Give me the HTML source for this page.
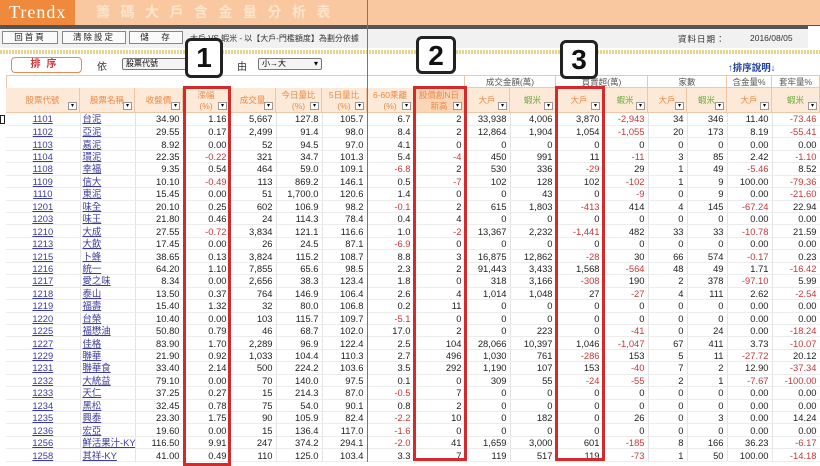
<!DOCTYPE html>
<html><head><meta charset="utf-8">
<style>
*{margin:0;padding:0;box-sizing:border-box}
body{width:820px;height:462px;overflow:hidden;background:#fff;font-family:"Liberation Sans","Noto Sans CJK TC",sans-serif;position:relative}
.a{position:absolute}
.top{left:0;top:0;width:820px;height:25px;background:#f9c8a0}
.logo{left:0;top:0;width:75px;height:25px;background:#ef8a3c;color:#fff;font-family:"Liberation Serif","Noto Serif CJK SC",serif;font-size:18px;line-height:25px;padding-left:9px;letter-spacing:1px}
.ttl{left:96px;top:2px;font-size:14px;color:#fbe5cc;letter-spacing:10.5px;line-height:20px;font-weight:bold}
.gbar{left:0;top:25px;width:820px;height:4px;background:#555}
.brow{left:0;top:29px;width:820px;height:19px;background:#f1f1f1}
.btn{top:31px;height:13px;border:1px solid #888;background:#fafafa;font-size:8.5px;line-height:11px;text-align:center;letter-spacing:2px;color:#222}
.dash{left:0;top:50px;width:820px;height:4px;background:repeating-linear-gradient(90deg,#e6d48a 0 2px,#fff 2px 3px)}
.sel{height:12px;border:1px solid #777;background:#f4f4f4;font-size:8px;line-height:10px;padding-left:3px;border-radius:2px}
.sel:after{content:"▾";position:absolute;right:3px;top:0;font-size:8px}
.num{background:#fff;border:3px solid #222;border-radius:6px;font:bold 28px/34px "Liberation Sans",sans-serif;text-align:center;color:#111;z-index:5}
.rb{border:3px solid #d42a2a;z-index:4}
table{border-collapse:collapse;table-layout:fixed;position:absolute;left:6px;top:113px;width:814px}
td{height:12.44px;font-size:9.4px;line-height:11px;text-align:right;padding:0 3px 0 0;border-right:1px solid #e4e4e4;border-bottom:1px solid #ececec;white-space:nowrap;overflow:hidden;color:#222}
td:nth-child(1){text-align:center;padding:0}
td:nth-child(2){text-align:left;padding-left:2px}
td:nth-child(1) span,td:nth-child(2) span{color:#3b3b9e;text-decoration:underline}
td.n{color:#c43838}
.h{background:#fde9d8;border-right:1px solid #f0c7a4;border-bottom:1px solid #f0c7a4;color:#e88a44;font-size:8.5px;text-align:center;position:absolute}
.h i{position:absolute;right:2px;bottom:2px;width:9px;height:8px;background:#fff;border:1px solid #999;font-style:normal;font-size:6px;line-height:6px;color:#000}
.g{color:#6aa83a}
</style></head><body>
<div class="a top"></div>
<div class="a logo">Trendx</div>
<div class="a ttl">籌碼大戶含金量分析表</div>
<div class="a gbar"></div>
<div class="a brow"></div>
<div class="a btn" style="left:2px;width:56px">回首頁</div>
<div class="a btn" style="left:62px;width:64px">清除設定</div>
<div class="a btn" style="left:129px;width:54px">儲　存</div>
<div class="a" style="left:190px;top:33px;font-size:8px;color:#333">大戶 VS 蝦米 - 以【大戶-門檻額度】為劃分依據</div>
<div class="a" style="left:678px;top:33px;font-size:8.5px;color:#333;letter-spacing:1px">資料日期：</div>
<div class="a" style="left:750px;top:33px;font-size:8.5px;color:#333">2016/08/05</div>
<div class="a" style="left:808px;top:26px;width:12px;height:24px;background:#fff"></div>
<div class="a dash"></div>
<div class="a" style="left:11px;top:57px;width:71px;height:16px;border:1px solid #e48a52;border-radius:4px;background:#fff;color:#d83030;font-size:10px;font-weight:bold;text-align:center;line-height:14px;letter-spacing:6px">排序</div>
<div class="a" style="left:97px;top:58px;font-size:10px;color:#333">依</div>
<div class="a sel" style="left:122px;top:58px;width:100px">股票代號</div>
<div class="a" style="left:237px;top:58px;font-size:10px;color:#333">由</div>
<div class="a sel" style="left:258px;top:58px;width:64px">小→大</div>
<div class="a" style="left:728px;top:60px;font-size:9.5px;color:#1b3fa0;font-weight:bold">↑排序說明↓</div>
<div class="a" style="left:6px;top:75px;width:814px;height:38px;border-top:1px solid #f0c7a4;border-left:1px solid #f0c7a4"></div>
<div class="a" style="left:0;top:115px;width:5px;height:9px;border:1px solid #222"></div>
<div class="a" style="left:367px;top:0;width:1px;height:462px;background:#777;z-index:3"></div>

<div class="h" style="left:414px;top:76px;width:51px;height:12px;background:#fff"></div>
<div class="h" style="left:465px;top:76px;width:91px;height:12px;background:#fff;color:#555">成交金額(萬)</div>
<div class="h" style="left:556px;top:76px;width:92px;height:12px;background:#fff;color:#555">買賣超(萬)</div>
<div class="h" style="left:648px;top:76px;width:79px;height:12px;background:#fff;color:#555">家數</div>
<div class="h" style="left:727px;top:76px;width:45px;height:12px;background:#fff;color:#555">含金量%</div>
<div class="h" style="left:772px;top:76px;width:48px;height:12px;background:#fff;color:#555">套牢量%</div>
<div class="h" style="left:6px;top:88px;width:74px;height:25px;line-height:25px">股票代號<i>▾</i></div>
<div class="h" style="left:80px;top:88px;width:55px;height:25px;line-height:25px">股票名稱<i>▾</i></div>
<div class="h" style="left:135px;top:88px;width:48px;height:25px;line-height:25px">收盤價<i>▾</i></div>
<div class="h" style="left:183px;top:88px;width:47px;height:25px;line-height:11px;padding-top:2px">漲幅<br>(%)<i>▾</i></div>
<div class="h" style="left:230px;top:88px;width:46px;height:25px;line-height:25px">成交量<i>▾</i></div>
<div class="h" style="left:276px;top:88px;width:46px;height:25px;line-height:11px;padding-top:2px">今日量比<br>(%)<i>▾</i></div>
<div class="h" style="left:322px;top:88px;width:45px;height:25px;line-height:11px;padding-top:2px">5日量比<br>(%)<i>▾</i></div>
<div class="h" style="left:367px;top:88px;width:47px;height:25px;line-height:11px;padding-top:2px">6-60乘離<br>(%)<i>▾</i></div>
<div class="h" style="left:414px;top:88px;width:51px;height:25px;line-height:11px;padding-top:2px;background:#fbd5b8">股價創N日<br>新高<i>▾</i></div>
<div class="h" style="left:465px;top:88px;width:45px;height:25px;line-height:25px">大戶<i>▾</i></div>
<div class="h g" style="left:510px;top:88px;width:46px;height:25px;line-height:25px">蝦米<i>▾</i></div>
<div class="h" style="left:556px;top:88px;width:47px;height:25px;line-height:25px">大戶<i>▾</i></div>
<div class="h g" style="left:603px;top:88px;width:45px;height:25px;line-height:25px">蝦米<i>▾</i></div>
<div class="h" style="left:648px;top:88px;width:39px;height:25px;line-height:25px">大戶<i>▾</i></div>
<div class="h g" style="left:687px;top:88px;width:40px;height:25px;line-height:25px">蝦米<i>▾</i></div>
<div class="h" style="left:727px;top:88px;width:45px;height:25px;line-height:25px">大戶<i>▾</i></div>
<div class="h g" style="left:772px;top:88px;width:48px;height:25px;line-height:25px">蝦米<i>▾</i></div>

<table>
<colgroup><col style="width:74px"><col style="width:55px"><col style="width:48px"><col style="width:47px"><col style="width:46px"><col style="width:46px"><col style="width:45px"><col style="width:47px"><col style="width:51px"><col style="width:45px"><col style="width:46px"><col style="width:47px"><col style="width:45px"><col style="width:39px"><col style="width:40px"><col style="width:45px"><col style="width:48px"></colgroup>
<tr><td><span>1101</span></td><td><span>台泥</span></td><td>34.90</td><td>1.16</td><td>5,667</td><td>127.8</td><td>105.7</td><td>6.7</td><td>2</td><td>33,938</td><td>4,006</td><td>3,870</td><td class="n">-2,943</td><td>34</td><td>346</td><td>11.40</td><td class="n">-73.46</td></tr>
<tr><td><span>1102</span></td><td><span>亞泥</span></td><td>29.55</td><td>0.17</td><td>2,499</td><td>91.4</td><td>98.0</td><td>8.4</td><td>2</td><td>12,864</td><td>1,904</td><td>1,054</td><td class="n">-1,055</td><td>20</td><td>173</td><td>8.19</td><td class="n">-55.41</td></tr>
<tr><td><span>1103</span></td><td><span>嘉泥</span></td><td>8.92</td><td>0.00</td><td>52</td><td>94.5</td><td>97.0</td><td>4.1</td><td>0</td><td>0</td><td>0</td><td>0</td><td>0</td><td>0</td><td>0</td><td>0.00</td><td>0.00</td></tr>
<tr><td><span>1104</span></td><td><span>環泥</span></td><td>22.35</td><td class="n">-0.22</td><td>321</td><td>34.7</td><td>101.3</td><td>5.4</td><td class="n">-4</td><td>450</td><td>991</td><td>11</td><td class="n">-11</td><td>3</td><td>85</td><td>2.42</td><td class="n">-1.10</td></tr>
<tr><td><span>1108</span></td><td><span>幸福</span></td><td>9.35</td><td>0.54</td><td>464</td><td>59.0</td><td>109.1</td><td class="n">-6.8</td><td>2</td><td>530</td><td>336</td><td class="n">-29</td><td>29</td><td>1</td><td>49</td><td class="n">-5.46</td><td>8.52</td></tr>
<tr><td><span>1109</span></td><td><span>信大</span></td><td>10.10</td><td class="n">-0.49</td><td>113</td><td>869.2</td><td>146.1</td><td>0.5</td><td class="n">-7</td><td>102</td><td>128</td><td>102</td><td class="n">-102</td><td>1</td><td>9</td><td>100.00</td><td class="n">-79.36</td></tr>
<tr><td><span>1110</span></td><td><span>東泥</span></td><td>15.45</td><td>0.00</td><td>51</td><td>1,700.0</td><td>120.6</td><td>1.4</td><td>0</td><td>0</td><td>43</td><td>0</td><td class="n">-9</td><td>0</td><td>9</td><td>0.00</td><td class="n">-21.60</td></tr>
<tr><td><span>1201</span></td><td><span>味全</span></td><td>20.10</td><td>0.25</td><td>602</td><td>106.9</td><td>98.2</td><td class="n">-0.1</td><td>2</td><td>615</td><td>1,803</td><td class="n">-413</td><td>414</td><td>4</td><td>145</td><td class="n">-67.24</td><td>22.94</td></tr>
<tr><td><span>1203</span></td><td><span>味王</span></td><td>21.80</td><td>0.46</td><td>24</td><td>114.3</td><td>78.4</td><td>0.4</td><td>4</td><td>0</td><td>0</td><td>0</td><td>0</td><td>0</td><td>0</td><td>0.00</td><td>0.00</td></tr>
<tr><td><span>1210</span></td><td><span>大成</span></td><td>27.55</td><td class="n">-0.72</td><td>3,834</td><td>121.1</td><td>116.6</td><td>1.0</td><td class="n">-2</td><td>13,367</td><td>2,232</td><td class="n">-1,441</td><td>482</td><td>33</td><td>33</td><td class="n">-10.78</td><td>21.59</td></tr>
<tr><td><span>1213</span></td><td><span>大飲</span></td><td>17.45</td><td>0.00</td><td>26</td><td>24.5</td><td>87.1</td><td class="n">-6.9</td><td>0</td><td>0</td><td>0</td><td>0</td><td>0</td><td>0</td><td>0</td><td>0.00</td><td>0.00</td></tr>
<tr><td><span>1215</span></td><td><span>卜蜂</span></td><td>38.65</td><td>0.13</td><td>3,824</td><td>115.2</td><td>108.7</td><td>8.8</td><td>3</td><td>16,875</td><td>12,862</td><td class="n">-28</td><td>30</td><td>66</td><td>574</td><td class="n">-0.17</td><td>0.23</td></tr>
<tr><td><span>1216</span></td><td><span>統一</span></td><td>64.20</td><td>1.10</td><td>7,855</td><td>65.6</td><td>98.5</td><td>2.3</td><td>2</td><td>91,443</td><td>3,433</td><td>1,568</td><td class="n">-564</td><td>48</td><td>49</td><td>1.71</td><td class="n">-16.42</td></tr>
<tr><td><span>1217</span></td><td><span>愛之味</span></td><td>8.34</td><td>0.00</td><td>2,656</td><td>38.3</td><td>123.4</td><td>1.8</td><td>0</td><td>318</td><td>3,166</td><td class="n">-308</td><td>190</td><td>2</td><td>378</td><td class="n">-97.10</td><td>5.99</td></tr>
<tr><td><span>1218</span></td><td><span>泰山</span></td><td>13.50</td><td>0.37</td><td>764</td><td>146.9</td><td>106.4</td><td>2.6</td><td>4</td><td>1,014</td><td>1,048</td><td>27</td><td class="n">-27</td><td>4</td><td>111</td><td>2.62</td><td class="n">-2.54</td></tr>
<tr><td><span>1219</span></td><td><span>福壽</span></td><td>15.40</td><td>1.32</td><td>32</td><td>80.0</td><td>106.8</td><td>0.2</td><td>11</td><td>0</td><td>0</td><td>0</td><td>0</td><td>0</td><td>0</td><td>0.00</td><td>0.00</td></tr>
<tr><td><span>1220</span></td><td><span>台榮</span></td><td>10.40</td><td>0.00</td><td>103</td><td>115.7</td><td>109.7</td><td class="n">-5.1</td><td>0</td><td>0</td><td>0</td><td>0</td><td>0</td><td>0</td><td>0</td><td>0.00</td><td>0.00</td></tr>
<tr><td><span>1225</span></td><td><span>福懋油</span></td><td>50.80</td><td>0.79</td><td>46</td><td>68.7</td><td>102.0</td><td>17.0</td><td>2</td><td>0</td><td>223</td><td>0</td><td class="n">-41</td><td>0</td><td>24</td><td>0.00</td><td class="n">-18.24</td></tr>
<tr><td><span>1227</span></td><td><span>佳格</span></td><td>83.90</td><td>1.70</td><td>2,289</td><td>96.9</td><td>122.4</td><td>2.5</td><td>104</td><td>28,066</td><td>10,397</td><td>1,046</td><td class="n">-1,047</td><td>67</td><td>411</td><td>3.73</td><td class="n">-10.07</td></tr>
<tr><td><span>1229</span></td><td><span>聯華</span></td><td>21.90</td><td>0.92</td><td>1,033</td><td>104.4</td><td>110.3</td><td>2.7</td><td>496</td><td>1,030</td><td>761</td><td class="n">-286</td><td>153</td><td>5</td><td>11</td><td class="n">-27.72</td><td>20.12</td></tr>
<tr><td><span>1231</span></td><td><span>聯華食</span></td><td>33.40</td><td>2.14</td><td>500</td><td>224.2</td><td>103.6</td><td>3.5</td><td>292</td><td>1,190</td><td>107</td><td>153</td><td class="n">-40</td><td>7</td><td>2</td><td>12.90</td><td class="n">-37.34</td></tr>
<tr><td><span>1232</span></td><td><span>大統益</span></td><td>79.10</td><td>0.00</td><td>70</td><td>140.0</td><td>97.5</td><td>0.1</td><td>0</td><td>309</td><td>55</td><td class="n">-24</td><td class="n">-55</td><td>2</td><td>1</td><td class="n">-7.67</td><td class="n">-100.00</td></tr>
<tr><td><span>1233</span></td><td><span>天仁</span></td><td>37.25</td><td>0.27</td><td>15</td><td>214.3</td><td>87.0</td><td class="n">-0.5</td><td>7</td><td>0</td><td>0</td><td>0</td><td>0</td><td>0</td><td>0</td><td>0.00</td><td>0.00</td></tr>
<tr><td><span>1234</span></td><td><span>黑松</span></td><td>32.45</td><td>0.78</td><td>75</td><td>54.0</td><td>90.1</td><td>0.8</td><td>2</td><td>0</td><td>0</td><td>0</td><td>0</td><td>0</td><td>0</td><td>0.00</td><td>0.00</td></tr>
<tr><td><span>1235</span></td><td><span>興泰</span></td><td>23.30</td><td>1.75</td><td>90</td><td>105.9</td><td>82.4</td><td class="n">-2.2</td><td>10</td><td>0</td><td>182</td><td>0</td><td>26</td><td>0</td><td>3</td><td>0.00</td><td>14.24</td></tr>
<tr><td><span>1236</span></td><td><span>宏亞</span></td><td>19.60</td><td>0.00</td><td>15</td><td>136.4</td><td>117.0</td><td class="n">-1.6</td><td>0</td><td>0</td><td>0</td><td>0</td><td>0</td><td>0</td><td>0</td><td>0.00</td><td>0.00</td></tr>
<tr><td><span>1256</span></td><td><span>鮮活果汁-KY</span></td><td>116.50</td><td>9.91</td><td>247</td><td>374.2</td><td>294.1</td><td class="n">-2.0</td><td>41</td><td>1,659</td><td>3,000</td><td>601</td><td class="n">-185</td><td>8</td><td>166</td><td>36.23</td><td class="n">-6.17</td></tr>
<tr><td><span>1258</span></td><td><span>其祥-KY</span></td><td>41.00</td><td>0.49</td><td>110</td><td>125.0</td><td>103.4</td><td>3.3</td><td>7</td><td>119</td><td>517</td><td>119</td><td class="n">-73</td><td>1</td><td>50</td><td>100.00</td><td class="n">-14.18</td></tr>
</table>

<div class="a rb" style="left:183px;top:86px;width:48px;height:380px"></div>
<div class="a rb" style="left:413px;top:86px;width:54px;height:375px"></div>
<div class="a rb" style="left:555px;top:86px;width:50px;height:375px"></div>
<div class="a num" style="left:185px;top:38px;width:38px;height:40px">1</div>
<div class="a num" style="left:416px;top:36px;width:40px;height:38px">2</div>
<div class="a num" style="left:560px;top:40px;width:38px;height:39px">3</div>
</body></html>
